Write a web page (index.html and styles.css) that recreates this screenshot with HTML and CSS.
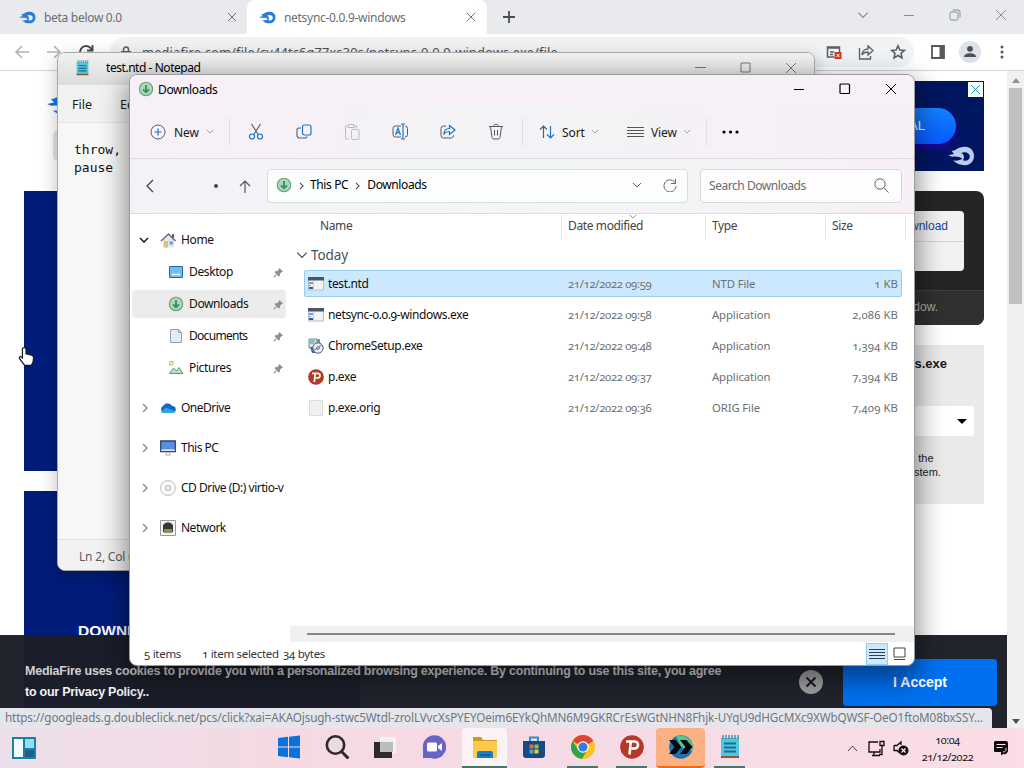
FILE: index.html
```html
<!DOCTYPE html>
<html lang="en">
<head>
<meta charset="utf-8">
<title>Desktop</title>
<link rel="stylesheet" href="styles.css">
</head>
<body>
<svg class="defs" aria-hidden="true">
  <symbol id="flame" viewBox="0 0 32 24"><path fill-rule="evenodd" d="M0 11L7 9.500L4 6C10 6 11 1 20 1C27 1 31 6 31 12S27 23 20 23C14 23 10 21 6 17.500C11 18 15 17 17 15C14 13 9 12 5 13ZM15.500 8.500C19 10 20 13 18 17C22 19 26 16 26 12.500C26 8.500 20 6 15.500 8.500Z"/></symbol>
  <symbol id="down" viewBox="0 0 16 16"><circle cx="8" cy="8" r="6.700" fill="#a7dab7" stroke="#6f9c80" stroke-width="1.100"/><path d="M8 4v7M5 8.300l3 3 3-3" fill="none" stroke="#3f8a60" stroke-width="1.800"/></symbol>
  <symbol id="x" viewBox="0 0 12 12"><path d="M1 1l10 10M11 1L1 11" fill="none" stroke="currentColor"/></symbol>
  <symbol id="pin" viewBox="0 0 12 12"><path d="M7 1l4 4-1.500.5-2 2 0 2-1 1L1.500 5.500l1-1h2l2-2z" fill="#8c9096"/><path d="M4 8L.8 11.200" stroke="#8c9096" stroke-width="1.200"/></symbol>
  <symbol id="chev" viewBox="0 0 10 6"><path d="M1 1l4 4 4-4" fill="none" stroke="currentColor"/></symbol>
  <symbol id="right" viewBox="0 0 6 10"><path d="M1 1l4 4-4 4" fill="none" stroke="currentColor" stroke-width="1.400"/></symbol>
  <symbol id="app" viewBox="0 0 16 16"><path d="M.5 2h15v12H.5z" fill="#f2f4f6" stroke="#b9bfc6"/><path d="M0 1h16v3.500H0z" fill="#46566b"/><path d="M1 6h4v2H1zM1 9h2v1H1z" fill="#68a4d8"/><path d="M1 11h4v2H1z" fill="#28609c"/><path d="M5.500 5v9" stroke="#c9ced3"/></symbol>
  <symbol id="pee" viewBox="0 0 24 24"><circle cx="12" cy="12" r="11.800" fill="#b33a26"/><path d="M6 6.500h8.500a3.300 3.300 0 0 1 0 7H11.500M10.800 6.500L9.500 19.500" fill="none" stroke="#fff" stroke-width="2.600"/></symbol>
  <symbol id="pad" viewBox="0 0 20 24"><path d="M1 3h18v19H1z" fill="#50c7de"/><path d="M1 21h18v2H1z" fill="#8e5a2c"/><path d="M3 0v4M6 0v4M9 0v4M12 0v4M15 0v4M18 0v4" stroke="#17607b"/><path d="M4 8.500h12M4 12.500h12M4 16.500h12" stroke="#14718f" stroke-width="1.800"/></symbol>
</svg>

<main class="desktop">
<section class="browser">
  <div class="tabs">
    <div class="tab"><svg class="fav"><use href="#flame"/></svg><span>beta below 0.0</span><svg class="tab-x"><use href="#x"/></svg></div>
    <div class="tab active"><svg class="fav"><use href="#flame"/></svg><span>netsync-0.0.9-windows</span><svg class="tab-x"><use href="#x"/></svg></div>
    <svg class="plus" viewBox="0 0 12 12"><path d="M6 0v12M0 6h12" stroke="#4a4e53" stroke-width="1.800"/></svg>
    <div class="chrome-ctl">
      <svg width="12" height="8"><use href="#chev"/></svg>
      <svg width="12" height="12" viewBox="0 0 12 12"><path d="M1 6.500h10" stroke="currentColor"/></svg>
      <svg width="12" height="12" viewBox="0 0 12 12" fill="none" stroke="currentColor"><rect x="1" y="3" width="8" height="8" rx="1.500"/><path d="M3.500 1h5.500a2 2 0 0 1 2 2v5.500"/></svg>
      <svg width="12" height="12"><use href="#x"/></svg>
    </div>
  </div>
  <div class="toolbar">
    <svg class="nav-i dim" viewBox="0 0 16 16"><path d="M15 8H2M8 2L2 8l6 6"/></svg>
    <svg class="nav-i dim" viewBox="0 0 16 16"><path d="M1 8h13M8 2l6 6-6 6"/></svg>
    <svg class="nav-i" viewBox="0 0 16 16"><path d="M14 9a6 6 0 1 1-2-5.500L14 6M14.500 1v5.500H9"/></svg>
    <div class="omni">
      <svg width="10" height="13" viewBox="0 0 10 13"><path d="M0 5h10v8H0z" fill="#5a5e63"/><path d="M2.500 5V3.500a2.500 2.500 0 0 1 5 0V5" fill="none" stroke="#5a5e63" stroke-width="1.500"/></svg>
      <span class="url">mediafire.com/file/cv44tc6q77xs30s/netsync-0.0.9-windows.exe/file</span>
      <div class="omni-i">
        <svg width="16" height="16" viewBox="0 0 16 16"><path d="M8 13H1.500V3h12v5M1 4h13M4 8h4M4 10.500h3" fill="none" stroke="#5a5e63" stroke-width="1.500"/><path d="M8.500 8h7v7h-7z" fill="#cc3a32"/><path d="M10.500 10l3 3M13.500 10l-3 3" stroke="#fff"/></svg>
        <svg width="16" height="16" viewBox="0 0 16 16" fill="none" stroke="#5a5e63" stroke-width="1.300"><path d="M1.500 4v11h11v-3"/><path d="M4 11c0-4 3-6 6-6V2l5 4.500L10 11V8c-3 0-5 1-6 3z"/></svg>
        <svg width="16" height="16" viewBox="0 0 16 16"><path d="M8 1.800l1.900 4.200 4.500.4-3.400 3 1 4.500L8 11.500l-4 2.400 1-4.500-3.400-3 4.500-.4z" fill="none" stroke="#5a5e63" stroke-width="1.600"/></svg>
      </div>
    </div>
    <svg class="side-i" viewBox="0 0 14 14"><path d="M1 1h12v12H1z" fill="none" stroke="#55595e" stroke-width="1.800"/><path d="M8.500 1H13v12H8.500z" fill="#55595e"/></svg>
    <svg class="avatar" viewBox="0 0 22 22"><circle cx="11" cy="11" r="11" fill="#dde2e8"/><circle cx="11" cy="7.800" r="2.900" fill="#4a5158"/><path d="M5 16c0-5 12-5 12 0z" fill="#4a5158"/></svg>
    <svg class="dots" viewBox="0 0 4 14"><g fill="#55595e"><circle cx="2" cy="2" r="1.500"/><circle cx="2" cy="7" r="1.500"/><circle cx="2" cy="12" r="1.500"/></g></svg>
  </div>
  <div class="viewport">
    <div class="page">
      <div class="col-left">
        <svg class="logo"><use href="#flame"/></svg>
        <div class="stub"></div>
        <div class="blue"></div>
        <div class="blue second"><b>DOWNLOAD</b></div>
      </div>
      <div class="col-right">
        <div class="ad">
          <div class="deal">DEAL</div>
          <svg class="ad-x"><use href="#x"/></svg>
          <svg class="ad-f"><use href="#flame"/></svg>
        </div>
        <div class="dark">
          <div class="dark-top"><div class="link-card"><div>Download</div></div></div>
          <div class="dark-foot">window.</div>
        </div>
        <div class="info">
          <b>netsync-0.0.9-windows.exe</b>
          <div class="select"><svg width="10" height="5"><path d="M0 0h10L5 5z"/></svg></div>
          <p>on the<br>system.</p>
        </div>
      </div>
    </div>
    <div class="scroll">
      <svg width="8" height="5" viewBox="0 0 8 5"><path d="M0 5h8L4 0z" fill="#939393"/></svg>
      <div class="thumb"></div>
      <svg width="8" height="5" viewBox="0 0 8 5"><path d="M0 0h8L4 5z" fill="#505050"/></svg>
    </div>
    <div class="cookie">
      <p><span class="c1">MediaFire uses cookies to provide you with a personalized browsing experience. By continuing to use this site, you agree</span><br><span class="c2">to our Privacy Policy..</span></p>
      <svg width="24" height="24" viewBox="0 0 24 24"><circle cx="12" cy="12" r="12" fill="#a0a0a3"/><path d="M7.500 7.500l9 9M16.500 7.500l-9 9" stroke="#1b1c22" stroke-width="2"/></svg>
      <div class="accept">I Accept</div>
    </div>
    <div class="status-url"><span>https://googleads.g.doubleclick.net/pcs/click?xai=AKAOjsugh-stwc5Wtdl-zrolLVvcXsPYEYOeim6EYkQhMN6M9GKRCrEsWGtNHN8Fhjk-UYqU9dHGcMXc9XWbQWSF-OeO1ftoM08bxSSY...</span></div>
  </div>
</section>

<section class="notepad">
  <div class="np-title"><svg width="13" height="16"><use href="#pad"/></svg><span>test.ntd - Notepad</span>
    <div class="np-ctl">
      <svg width="11" height="11" viewBox="0 0 11 11"><path d="M0 5.500h11" stroke="currentColor"/></svg>
      <svg width="11" height="11" viewBox="0 0 11 11"><path d="M1 1h9v9H1z" fill="none" stroke="currentColor"/></svg>
      <svg width="12" height="12"><use href="#x"/></svg>
    </div>
  </div>
  <div class="np-menu"><span>File</span><span>Edit</span></div>
  <pre class="np-text">throw,
pause</pre>
  <div class="np-status">Ln 2, Col 6</div>
</section>

<section class="explorer">
  <header class="ex-title"><svg width="16" height="16"><use href="#down"/></svg><span>Downloads</span>
    <div class="ex-ctl">
      <svg width="12" height="12" viewBox="0 0 12 12"><path d="M1 6.500h10" stroke="#000" stroke-width="1.200"/></svg>
      <svg width="12" height="12" viewBox="0 0 12 12"><rect x="1" y="1" width="9.500" height="9.500" rx="1" fill="none" stroke="#000" stroke-width="1.200"/></svg>
      <svg width="12" height="12"><use href="#x"/></svg>
    </div>
  </header>
  <div class="cmd">
    <div class="c-new"><svg width="16" height="16" viewBox="0 0 16 16" fill="none"><circle cx="8" cy="8" r="7" stroke="#555b66"/><path d="M8 4.500v7M4.500 8h7" stroke="#1672c4" stroke-width="1.200"/></svg><span>New</span><svg class="mini"><use href="#chev"/></svg></div>
    <div class="c-icons">
      <svg viewBox="0 0 16 18" fill="none"><path d="M3.500 1l7 11M12.500 1l-7 11" stroke="#5c626c" stroke-width="1.200"/><circle cx="4" cy="13.500" r="2.500" stroke="#1976c8" stroke-width="1.200"/><circle cx="12" cy="13.500" r="2.500" stroke="#1976c8" stroke-width="1.200"/></svg>
      <svg viewBox="0 0 16 18" fill="none"><rect x="6.500" y="2" width="8.500" height="10" rx="2" stroke="#1976c8" stroke-width="1.200"/><path d="M5 5H3a2 2 0 0 0-2 2v5.500a2.500 2.500 0 0 0 2.500 2.500H9a2 2 0 0 0 2-1.500" stroke="#555b66" stroke-width="1.100"/></svg>
      <svg viewBox="0 0 16 18" fill="none" stroke="#bcbcc4"><path d="M5 16H1.500V3H4M10 3h2.500v2M4 1.500h6v3H4z"/><rect x="7.500" y="6.500" width="7.500" height="10" rx="1"/></svg>
      <svg viewBox="0 0 16 18" fill="none"><path d="M9 3H3.500A2.500 2.500 0 0 0 1 5.500v6A2.500 2.500 0 0 0 3.500 14H9M13 3a2.500 2.500 0 0 1 2.500 2.500v6A2.500 2.500 0 0 1 13 14" stroke="#555b66"/><path d="M11 1v15M9 1h4M9 16h4M3.500 12l2.500-7 2.500 7M4.300 9.700h3.500" stroke="#1976c8" stroke-width="1.200"/></svg>
      <svg viewBox="0 0 16 18" fill="none"><path d="M6 3H3.500A2.500 2.500 0 0 0 1 5.500v7A2.500 2.500 0 0 0 3.500 15h8a2.500 2.500 0 0 0 2-2.500V12" stroke="#555b66"/><path d="M4 11c0-4 2.500-5.500 5.500-5.500v-3L15 7l-5.500 4.500v-3C7 8.500 5.500 9 4 11z" stroke="#1976c8" stroke-width="1.200"/></svg>
      <svg viewBox="0 0 16 18" fill="none" stroke="#555b66"><path d="M1 3.500h14M5.500 3.500c0-3 5-3 5 0M2.500 3.500L4 14.500a2 2 0 0 0 2 1.500h4a2 2 0 0 0 2-1.500l1.500-11M6.500 7v5.500M9.500 7v5.500"/></svg>
    </div>
    <div class="c-sort"><svg width="16" height="14" viewBox="0 0 16 14" fill="none"><path d="M4.500 13V1M1 4.500L4.500 1 8 4.500" stroke="#555b66" stroke-width="1.200"/><path d="M11.500 1v12M8 9.500l3.500 3.500L15 9.500" stroke="#1976c8" stroke-width="1.200"/></svg><span>Sort</span><svg class="mini"><use href="#chev"/></svg></div>
    <div class="c-view"><svg width="17" height="12" viewBox="0 0 17 12"><path d="M0 1.500h17M0 4.500h17M0 7.500h17M0 10.500h17" stroke="#555"/></svg><span>View</span><svg class="mini"><use href="#chev"/></svg></div>
    <svg class="more" width="17" height="4" viewBox="0 0 17 4"><circle cx="2" cy="2" r="1.600"/><circle cx="8.500" cy="2" r="1.600"/><circle cx="15" cy="2" r="1.600"/></svg>
  </div>
  <div class="addr">
    <svg class="a-back" width="8" height="14" viewBox="0 0 8 14"><path d="M7 1L1 7l6 6" fill="none" stroke="#444" stroke-width="1.300"/></svg>
    <i class="a-dot"></i>
    <svg class="a-up" width="12" height="13" viewBox="0 0 12 13"><path d="M6 13V1M1 6l5-5 5 5" fill="none" stroke="#555" stroke-width="1.200"/></svg>
    <div class="crumbs"><svg width="16" height="16"><use href="#down"/></svg><svg class="gt"><use href="#right"/></svg><span>This PC</span><svg class="gt"><use href="#right"/></svg><span>Downloads</span>
      <div class="a-end"><svg width="10" height="6"><use href="#chev"/></svg><svg width="14" height="14" viewBox="0 0 14 14"><path d="M12.500 5.500A6 6 0 1 0 13 8M12.500 1v4.500H8" fill="none" stroke="#666"/></svg></div>
    </div>
    <div class="search"><span>Search Downloads</span><svg width="15" height="15" viewBox="0 0 15 15"><circle cx="6" cy="6" r="5.200" fill="none" stroke="#666"/><path d="M9.800 9.800l4.700 4.700" stroke="#666"/></svg></div>
  </div>
  <div class="ex-body">
    <nav class="tree">
      <div class="top"><svg class="open"><use href="#chev"/></svg><svg class="ti" viewBox="0 0 16 16"><path d="M3 8v7.500h11V8L8.500 3z" fill="#e4e7ea"/><path d="M12 2h2v4h-2z" fill="#54606c"/><path d="M1 9l7.500-7L15.500 9" fill="none" stroke="#66717c" stroke-width="1.600"/><path d="M4 9h4v6.500H4z" fill="#d9c27a"/><path d="M9.500 9.500h3.500v3H9.500z" fill="#6aa2dc"/></svg><span>Home</span></div>
      <div class="sub"><svg class="ti" viewBox="0 0 16 16"><path d="M1.500 2.500h13v11h-13z" fill="#6ebcf2" stroke="#2b67a8"/><path d="M4 10.500h8" stroke="#fff" stroke-width="1.500"/></svg><span>Desktop</span><svg class="pin"><use href="#pin"/></svg></div>
      <div class="sub sel"><svg class="ti"><use href="#down"/></svg><span>Downloads</span><svg class="pin"><use href="#pin"/></svg></div>
      <div class="sub"><svg class="ti" viewBox="0 0 16 16"><path d="M2.500 1.500h8l3 3v10h-11z" fill="#e3ebf3" stroke="#8da0b4"/><path d="M10.500 1.500v3h3" fill="none" stroke="#8da0b4"/></svg><span class="docs">Documents</span><svg class="pin"><use href="#pin"/></svg></div>
      <div class="sub"><svg class="ti" viewBox="0 0 16 16"><path d="M1.500 1.500h3.500v3.500H1.500z" fill="#f5efb5" stroke="#c9bd6a"/><path d="M1.500 13.500l4-5.500 3 3 2.500-3.500 4 6z" fill="#b9dfc3" stroke="#5e9a70"/></svg><span>Pictures</span><svg class="pin"><use href="#pin"/></svg></div>
      <div class="top tall"><svg class="closed"><use href="#right"/></svg><svg class="ti" viewBox="0 0 16 16"><path d="M4 13a4 4 0 0 1-.5-7.500A5 5 0 0 1 12 6a3.500 3.500 0 0 1 .5 7z" fill="#1668bd"/><path d="M1 12l5-4.500L15.500 11.500 13 13H4C2.500 13 1.500 12.700 1 12z" fill="#2ba3ee"/></svg><span>OneDrive</span></div>
      <div class="top tall"><svg class="closed"><use href="#right"/></svg><svg class="ti" viewBox="0 0 16 16"><path d="M.7 1h14.600v10.500H.7z" fill="#5b8fe6" stroke="#32435e" stroke-width="1.300"/><path d="M1.300 9.500h13.400v1.500H1.300z" fill="#e9f1fa"/><path d="M6.500 12v2.500M9.500 12v2.500M5 15h6" stroke="#a9b0b8"/></svg><span>This PC</span></div>
      <div class="top tall"><svg class="closed"><use href="#right"/></svg><svg class="ti" viewBox="0 0 16 16" fill="#fbfbfb" stroke="#b8bcc0"><circle cx="8" cy="8" r="7.400"/><circle cx="8" cy="8" r="2.800"/><circle cx="8" cy="8" r="1" stroke-width=".6"/></svg><span>CD Drive (D:) virtio-v</span></div>
      <div class="top tall"><svg class="closed"><use href="#right"/></svg><svg class="ti" viewBox="0 0 16 16"><path d="M.5.5h15v15H.5z" fill="#f1f1ee" stroke="#9a9a98"/><path d="M3 12V5l3-2.500h4L13 5v7z" fill="#33383b"/><path d="M4 9h8v4H4z" fill="#8b8b5e"/></svg><span>Network</span></div>
    </nav>
    <div class="files">
      <div class="heads"><div>Name</div><div>Date modified<svg class="sortmark"><use href="#chev"/></svg></div><div>Type</div><div>Size</div><div></div></div>
      <div class="group"><svg width="12" height="8"><use href="#chev"/></svg><span>Today</span></div>
      <div class="rows">
        <div class="row on"><svg><use href="#app"/></svg><b>test.ntd</b><i>21/12/2022 09:59</i><i>NTD File</i><i>1 KB</i></div>
        <div class="row"><svg><use href="#app"/></svg><b>netsync-0.0.9-windows.exe</b><i>21/12/2022 09:58</i><i>Application</i><i>2,086 KB</i></div>
        <div class="row"><svg viewBox="0 0 16 16"><path d="M1 1h8v9H1z" fill="#d4e3ee" stroke="#6a8dab"/><path d="M2 3h5M2 5h4" stroke="#4a9c6a"/><path d="M9 1h3v4H9z" fill="#5eb35e"/><path d="M2 9h6v6H4z" fill="#3d6da6"/><circle cx="10" cy="10" r="5.200" fill="#e9eef4" stroke="#52627a"/><path d="M10 10l3.500-3.500M6 12l4-2" stroke="#7fa4d0" stroke-width="1.500"/><circle cx="10" cy="10" r="1.300" fill="#fff" stroke="#667"/></svg><b>ChromeSetup.exe</b><i>21/12/2022 09:48</i><i>Application</i><i>1,394 KB</i></div>
        <div class="row"><svg><use href="#pee"/></svg><b>p.exe</b><i>21/12/2022 09:37</i><i>Application</i><i>7,394 KB</i></div>
        <div class="row"><svg viewBox="0 0 16 16"><path d="M1.500.5h13v15h-13z" fill="#f0f0f0" stroke="#dcdcdc"/></svg><b>p.exe.orig</b><i>21/12/2022 09:36</i><i>ORIG File</i><i>7,409 KB</i></div>
      </div>
      <div class="hscroll"><div></div></div>
    </div>
  </div>
  <footer class="ex-status"><span class="s1">5 items</span><span class="s2">1 item selected</span><span class="s3">34 bytes</span>
    <div class="modes"><div><svg width="16" height="12" viewBox="0 0 16 12"><path d="M0 1.500h16M0 4.500h16M0 7.500h16M0 10.500h16" stroke="#333d48"/></svg></div><svg width="13" height="13" viewBox="0 0 13 13"><path d="M1 1h11v9H1zM1 12.500h11" fill="none" stroke="#444"/></svg></div>
  </footer>
</section>

<footer class="taskbar">
  <svg class="widgets" viewBox="0 0 24 22"><path d="M0 0h24v22H0z" fill="#1783a8"/><path d="M2 2h9v18H2z" fill="#f4fbfd"/><path d="M13 2h9v9h-9z" fill="#8fe0f2"/><path d="M13 13h9v7h-9z" fill="#1d5f88"/></svg>
  <div class="apps">
    <div><svg viewBox="0 0 24 24"><path d="M1 3l10-1.200V11.500H1zM12 1.700L23 .5v11H12zM1 12.500h10v9.700L1 21zM12 12.500h11v11l-11-1.200z" fill="#0a72d8"/></svg></div>
    <div><svg viewBox="0 0 24 24"><circle cx="10.500" cy="10" r="8.700" fill="#e9dbe2" stroke="#33242c" stroke-width="2.600"/><path d="M16.500 16.500l7 7" stroke="#33242c" stroke-width="3"/></svg></div>
    <div><svg viewBox="0 0 24 24"><path d="M7 2h16v16H7z" fill="#f3f2f0"/><path d="M1 7h18v16H1z" fill="#2c2a2d"/><path d="M7 7h13v10H7z" fill="#bdbcbc"/></svg></div>
    <div><svg viewBox="0 0 24 24"><circle cx="12.500" cy="12" r="11.700" fill="#6665c5"/><path d="M1 23V12l8 11z" fill="#6665c5"/><rect x="5" y="7.500" width="10" height="9" rx="1.500" fill="#fff"/><path d="M16 11l4-3v8l-4-3z" fill="#fff"/></svg></div>
    <div class="front run"><svg viewBox="0 0 24 24"><path d="M0 2h8l2 3h14v18H0z" fill="#d9941c"/><path d="M0 6h24v17H0z" fill="#fccb4c"/><path d="M4 23v-5a2 2 0 0 1 2-2h12a2 2 0 0 1 2 2v5z" fill="#1580c8"/><path d="M7 20h10" stroke="#0c5d9b" stroke-width="1.500"/></svg></div>
    <div><svg viewBox="0 0 24 24"><path d="M8 6V2.500h8V6" fill="none" stroke="#2f8ed0" stroke-width="2"/><path d="M1 6h22v14a3 3 0 0 1-3 3H4a3 3 0 0 1-3-3z" fill="#184b7d"/><path d="M7.500 9.500h4v4h-4z" fill="#ed6840"/><path d="M12.500 9.500h4v4h-4z" fill="#88c247"/><path d="M7.500 14.500h4v4h-4z" fill="#39a9e8"/><path d="M12.500 14.500h4v4h-4z" fill="#fac62f"/></svg></div>
    <div class="run"><svg viewBox="0 0 24 24"><circle cx="12" cy="12" r="12" fill="#fbc51d"/><path d="M12 12L1.600 6A12 12 0 0 1 22.400 6z" fill="#df4435"/><path d="M1.600 6A12 12 0 0 0 11 24l5.500-9.500H7z" fill="#30a350"/><circle cx="12" cy="12" r="5.800" fill="#fff"/><circle cx="12" cy="12" r="4.600" fill="#3979e2"/></svg></div>
    <div class="run"><svg><use href="#pee"/></svg></div>
    <div class="alert"><svg viewBox="0 0 24 24"><circle cx="12" cy="12" r="11.800" fill="#1d6fae"/><path d="M7 1.500A12 12 0 0 1 23 16L12 12z" fill="#54c98b"/><path d="M0 5h6.500l6 7-6 7H0l5.500-7zM11 5h6.500l6 7-6 7H11l5.500-7z" fill="#06090f"/></svg></div>
    <div class="run"><svg class="tpad"><use href="#pad"/></svg></div>
  </div>
  <div class="tray">
    <svg width="11" height="11" viewBox="0 0 11 11"><path d="M1 8l4.500-5L10 8" fill="none" stroke="#443c40"/></svg>
    <svg width="17" height="17" viewBox="0 0 17 17" fill="none" stroke="#15090f" stroke-width="1.300"><path d="M10 2H1v10h11V9M4 15.500h8M6 12v3"/><path d="M12 1.500h4v4h-4zM14 5.500v9h-3"/></svg>
    <svg width="16" height="16" viewBox="0 0 16 16"><path d="M1 5.500h3L8 2v3M1 5.500v5h3l2 2" fill="none" stroke="#15090f" stroke-width="1.300"/><circle cx="10.500" cy="10.500" r="5" fill="#15090f"/><path d="M8.500 8.500l4 4M12.500 8.500l-4 4" stroke="#fff" stroke-width="1.200"/></svg>
    <div class="clock"><span>10:04</span><span>21/12/2022</span></div>
    <svg width="16" height="16" viewBox="0 0 16 16"><path d="M2 1h11a2 2 0 0 1 2 2v6a4 4 0 0 1-5 5l-2 1.500V12H2a1.500 1.500 0 0 1-1-1V2z" fill="#120a0e"/><path d="M3.500 4.500h9M3.500 7.500h6" stroke="#f8e6ec" stroke-width="1.200"/><path d="M10 12a3 3 0 0 0 3-4" fill="none" stroke="#f8e6ec"/></svg>
  </div>
</footer>

<svg class="cursor" viewBox="0 0 18 22"><path d="M6.500 1.500c1.500 0 2 1 2 2v4.500l6 1.500c1.500.5 2 1 2 2.500l-.5 4.500-2 4H7L1.500 13c-.5-1.500 1-2.500 2-1.500l1.200 1V3c0-1 .8-1.500 1.800-1.500z" fill="#fff" stroke="#16181c" stroke-width="1.300"/></svg>
</main>
</body>
</html>
```
FILE: styles.css
```css
* { box-sizing: border-box; }
body { margin: 0; font-family: "Noto Sans", "Open Sans", sans-serif; font-size: 12px; color: #1a1a1a; }
b, i { font-weight: normal; font-style: normal; }
p { margin: 0; }
svg { display: block; flex: none; }
span { white-space: nowrap; }
.defs { position: absolute; width: 0; height: 0; }
.desktop { position: relative; width: 1024px; height: 768px; overflow: hidden; background: #fff; }

/* Browser */
.browser { height: 728px; display: flex; flex-direction: column; }
.tabs { height: 34px; background: #e8eaed; display: flex; align-items: center; color: #6a6e73; }
.tab { width: 247px; height: 34px; padding: 0 10px 0 19px; display: flex; align-items: center; font-size: 12px; letter-spacing: -.3px; }
.tab.active { width: 240px; padding-left: 12px; padding-right: 11px; background: #fff; border-radius: 8px 8px 0 0; }
.fav { width: 17px; height: 13px; fill: #2b7dd0; margin-right: 8px; }
.tab-x { width: 10px; height: 10px; margin-left: auto; color: #55595e; }
.plus { width: 12px; height: 12px; margin-left: 16px; }
.chrome-ctl { margin-left: auto; padding: 0 17px 5px 0; display: flex; align-items: center; gap: 34px; color: #8a8d91; }
.toolbar { height: 37px; border-bottom: 1px solid #d2d4d7; display: flex; align-items: center; padding: 0 15px 0 14px; background: #fff; }
.nav-i { width: 16px; height: 16px; fill: none; stroke: #44484d; stroke-width: 1.900; margin-right: 16px; }
.nav-i.dim { stroke: #b1b4b8; stroke-width: 1.600; }
.omni { width: 804px; height: 30px; border-radius: 15px; background: #f0f2f4; display: flex; align-items: center; padding: 0 8px 0 11px; }
.url { font-size: 12.800px; letter-spacing: .18px; margin-left: 11px; color: #4b4f54; }
.omni-i { margin-left: auto; display: flex; gap: 16px; }
.side-i { width: 14px; height: 14px; margin-left: 17px; }
.avatar { width: 22px; height: 22px; margin-left: 14px; }
.dots { width: 4px; height: 14px; margin-left: auto; margin-right: 5px; }
.viewport { flex: 1; position: relative; display: flex; overflow: hidden; }
.page { width: 1007px; display: flex; justify-content: space-between; padding: 0 23px 0 24px; font-family: "Liberation Sans", sans-serif; }
.col-left { width: 336px; }
.logo { width: 38px; height: 24px; margin: 22px 0 13px 20px; fill: #0b76e8; }
.stub { width: 300px; height: 31px; margin-left: 29px; border-radius: 5px; background: #e4e4e6; }
.blue { height: 280px; margin-top: 30px; background: #001d7c; }
.blue.second { height: 260px; margin-top: 20px; padding: 131px 0 0 54px; color: #fff; }
.blue.second b { font-size: 15.500px; font-weight: bold; }
.col-right { width: 300px; display: flex; flex-direction: column; gap: 20px; padding-top: 10px; }
.ad { position: relative; height: 90px; background: #001660; padding: 27px 28px 0 0; }
.deal { width: 90px; height: 36px; margin-left: auto; border-radius: 18px; background: linear-gradient(#1482ff, #075aff); box-shadow: 0 4px 8px #2500a8; color: #fff; font-size: 13px; line-height: 36px; text-align: right; padding-right: 31px; }
.ad-x { position: absolute; right: 1px; top: 1px; width: 15px; height: 15px; background: #fff; color: #009aa8; padding: 2px; }
.ad-f { position: absolute; right: 7px; bottom: 5px; width: 31px; height: 20px; fill: #bccbf0; }
.dark { height: 134px; border-radius: 8px; background: #252525; overflow: hidden; }
.dark-top { height: 100px; padding: 20px 20px 0; border-bottom: 1px solid #3d3d3d; }
.link-card { height: 60px; border-radius: 4px; background: #f2f2f2; }
.link-card div { height: 31px; border-bottom: 1px solid #d5d5d5; color: #273aa3; text-align: right; padding: 8px 16px 0; }
.dark-foot { height: 34px; background: #303030; color: #aaa; text-align: right; padding: 9px 46px 0 0; font-size: 12px; }
.info { height: 159px; background: #eaeaea; }
.info b { display: block; font-weight: bold; font-size: 13px; text-align: right; padding: 11px 37px 0 0; height: 61px; }
.select { height: 30px; margin: 0 10px 0 20px; background: #fff; border-radius: 3px; display: flex; align-items: center; justify-content: flex-end; padding-right: 7px; }
.info p { font-size: 11px; line-height: 14px; padding: 15px 0 0 219px; }
.scroll { width: 17px; background: #f0f0f0; display: flex; flex-direction: column; align-items: center; padding: 7px 0 4px; }
.thumb { width: 13px; height: 216px; margin: 5px 0 auto; background: #c1c1c1; }
.cookie { position: absolute; left: 0; top: 564px; width: 1007px; height: 93px; background: rgba(28, 31, 40, .975); display: flex; padding: 24px 10px 0 25px; font-family: "Liberation Sans", sans-serif; font-weight: bold; color: #f2f2f4; }
.cookie p { width: 774px; font-size: 12.500px; line-height: 21px; padding-top: 2px; }
.c1 { letter-spacing: -.23px; color: #d0d0d4; }
.c2 { letter-spacing: -.25px; }
.cookie svg { margin-top: 11px; }
.accept { width: 154px; height: 47px; margin-left: 20px; border-radius: 3px; background: #0070f0; color: #fff; font-size: 14px; text-align: center; line-height: 47px; }
.status-url { position: absolute; left: 0; bottom: 0; width: 992px; height: 20px; padding-left: 5px; background: #e4e6ec; border-radius: 0 4px 0 0; color: #72757c; font-size: 11.700px; letter-spacing: -.12px; line-height: 19px; }

/* Notepad */
.notepad { position: absolute; left: 57px; top: 52px; width: 758px; height: 519px; border-radius: 8px; background: #f7f7f7; border: 1px solid #a9a9a9; display: flex; flex-direction: column; overflow: hidden; box-shadow: 0 6px 18px rgba(0,0,0,.25); }
.np-title { height: 32px; display: flex; align-items: center; padding: 0 17px 3px 18px; background: linear-gradient(#f1f1f1, #dcdcdc); }
.np-title span { margin-left: 17px; letter-spacing: -.45px; color: #000; }
.np-ctl { margin-left: auto; display: flex; align-items: center; gap: 34px; color: #777; }
.np-menu { height: 38px; border-bottom: 1px solid #e2e2e2; background: #f2f2f2; padding: 11px 0 0 14px; display: flex; gap: 28px; font-size: 12.500px; }
.np-text { flex: 1; margin: 0; padding: 18px 16px; font: 13px/18px "DejaVu Sans Mono", monospace; color: #111; }
.np-status { height: 31px; background: #f2f2f2; border-top: 1px solid #ddd; padding: 8px 21px; color: #5e5e5e; letter-spacing: -.2px; }

/* File manager */
.explorer { position: absolute; left: 129px; top: 74px; width: 786px; height: 592px; border: 1px solid #9b9b9f; border-radius: 8px; background: #fff; overflow: hidden; display: flex; flex-direction: column; box-shadow: 0 10px 26px 4px rgba(0,0,0,.42); letter-spacing: -.38px; }
.ex-title { height: 30px; background: #f7f0f7; display: flex; align-items: center; padding: 0 17px 2px 8px; gap: 4px; color: #000; }
.ex-ctl { margin-left: auto; display: flex; align-items: center; gap: 34px; }
.cmd { height: 54px; background: linear-gradient(100deg, #f8f0f8, #f3f3f5 45%, #f7f0f7); border-bottom: 1px solid #dcdade; display: flex; align-items: center; }
.cmd > div { display: flex; align-items: center; height: 28px; }
.cmd span { letter-spacing: -.1px; padding-top: 1px; }
.mini { width: 8px; height: 5px; color: #8a8a8f; }
.c-new { width: 100px; padding-left: 20px; border-right: 1px solid #e2dfe4; gap: 8px; }
.c-icons { width: 293px; padding-left: 17px; gap: 30px; border-right: 1px solid #e2dfe4; }
.c-icons svg { width: 18px; height: 18px; }
.c-sort { width: 88px; padding-left: 16px; gap: 7px; }
.c-view { width: 96px; padding-left: 16px; gap: 7px; border-right: 1px solid #e2dfe4; }
.cmd .mini { margin-left: -1px; }
.more { margin-left: 15px; }
.addr { height: 55px; background: linear-gradient(100deg, #f5f1f8, #f2f6f6 45%, #f7f0f6); border-bottom: 1px solid #d9dcdf; display: flex; align-items: center; padding-left: 16px; }
.a-dot { width: 4px; height: 4px; border-radius: 2px; background: #444; margin-left: 60px; }
.a-up { margin-left: 21px; }
.crumbs { width: 421px; height: 34px; margin-left: 16px; background: #fcfefe; border: 1px solid #d5dedb; border-radius: 4px; display: flex; align-items: center; padding: 0 10px 2px 8px; color: #000; }
.gt { width: 5px; height: 8px; margin: 2px 7px 0 7px; color: #555; }
.crumbs > svg:first-child + .gt { margin-right: 6px; }
.a-end { margin-left: auto; display: flex; align-items: center; gap: 21px; color: #666; }
.search { width: 202px; height: 34px; margin-left: 12px; background: #fdfdfe; border: 1px solid #d9d9dd; border-radius: 4px; display: flex; align-items: center; justify-content: space-between; padding: 0 12px 1px 8px; color: #6b6b70; letter-spacing: -.45px; }
.ex-body { flex: 1; display: flex; min-height: 0; }
.tree { width: 160px; padding-top: 10px; display: flex; flex-direction: column; }
.top, .sub { display: flex; align-items: center; height: 32px; flex: none; color: #111; }
.top span, .sub span, .crumbs span { position: relative; top: -.5px; }
.top.tall { height: 40px; letter-spacing: -.5px; }
.ti { width: 16px; height: 16px; }
.top .ti { margin-right: 5px; }
.open { width: 10px; height: 6px; margin: 0 11px 0 9px; color: #222; stroke-width: 1.600; }
.closed { width: 6px; height: 10px; margin: 0 12px 0 12px; color: #8a8a8a; }
.sub { height: 28px; margin: 2px 4px 2px 2px; padding-left: 36px; }
.sub .ti { margin-right: 5px; }
.sub.sel { background: #ececec; border-radius: 3px; }
.docs { letter-spacing: -.7px; }
.pin { width: 11px; height: 11px; margin: 0 2px 0 auto; }
.sub + .tall { margin-top: 4px; }
.files { flex: 1; display: flex; flex-direction: column; }
.heads { height: 26px; display: grid; grid-template-columns: 272px 144px 120px 80px 8px; color: #444; padding-top: 1px; }
.heads div { position: relative; border-right: 1px solid #e5e5e7; padding: 3px 0 0 6px; line-height: 16px; white-space: nowrap; }
.heads div:first-child { padding-left: 30px; }
.heads div:last-child { border: 0; }
.sortmark { position: absolute; left: 67px; top: -1px; width: 8px; height: 5px; color: #777; }
.group { height: 30px; display: flex; align-items: center; padding-left: 6px; gap: 3px; font-size: 13.500px; letter-spacing: -.1px; color: #4b5058; }
.rows { display: flex; flex-direction: column; gap: 4px; padding: 0 12px 0 14px; }
.row { height: 27px; border: 1px solid transparent; border-radius: 2px; display: grid; grid-template-columns: 20px 240px 144px 120px 1fr; align-items: center; padding: 0 3px; font-variant-numeric: oldstyle-nums; white-space: nowrap; }
.row svg { width: 16px; height: 16px; }
.row b { color: #111; letter-spacing: -.37px; }
.row i { color: #6c6f73; font-size: 11.300px; letter-spacing: -.1px; }
.row i:nth-child(3) { letter-spacing: -.32px; }
.row i:last-child { text-align: right; letter-spacing: .1px; }
.row.on { background: #cce8ff; border-color: #99cdf0; }
.hscroll { height: 16px; margin-top: auto; background: #f0f0f0; padding: 7px 19px 0 17px; }
.hscroll div { height: 2px; background: #858585; }
.ex-status { height: 23px; display: flex; align-items: center; padding-left: 14px; font-size: 11.500px; font-variant-numeric: oldstyle-nums; color: #30343c; letter-spacing: -.3px; }
.s1 { width: 58px; }
.s2 { width: 81px; }
.modes { margin-left: auto; display: flex; align-items: center; gap: 5px; padding-right: 8px; }
.modes div { width: 22px; height: 22px; background: #cce8ff; border: 1px solid #99cdf0; display: grid; place-items: center; }

/* Taskbar */
.taskbar { height: 40px; display: flex; background: linear-gradient(90deg, #ecdfea, #f5d9e3 30%, #f6dbe6 60%, #fbdde5); }
.widgets { width: 24px; height: 22px; margin: 9px 229px 0 12px; }
.apps { display: grid; grid-template-columns: 48px 48px 48px 50px 51px 48px 49px 49px 49px 49px; }
.apps > div { height: 40px; display: flex; justify-content: center; align-items: center; border-bottom: 2px solid transparent; }
.apps svg { width: 24px; height: 24px; }
.apps > .run { margin: 0 9px; border-color: #44786a; }
.apps > .front { margin: 0 3px; background: #fbf3f6; border-radius: 4px 4px 0 0; }
.apps > .alert { background: #fcb185; border-color: #f26a10; border-radius: 4px; }
.tray { margin-left: auto; display: flex; align-items: center; padding-right: 15px; }
.tray svg:nth-child(2) { margin: 0 8px 0 10px; }
.clock { width: 84px; padding-right: 7px; display: flex; flex-direction: column; align-items: center; line-height: 17px; font-size: 10.800px; letter-spacing: -.4px; color: #111; font-variant-numeric: oldstyle-nums; }
.cursor { position: absolute; left: 18px; top: 345px; width: 17px; height: 23px; }
```
